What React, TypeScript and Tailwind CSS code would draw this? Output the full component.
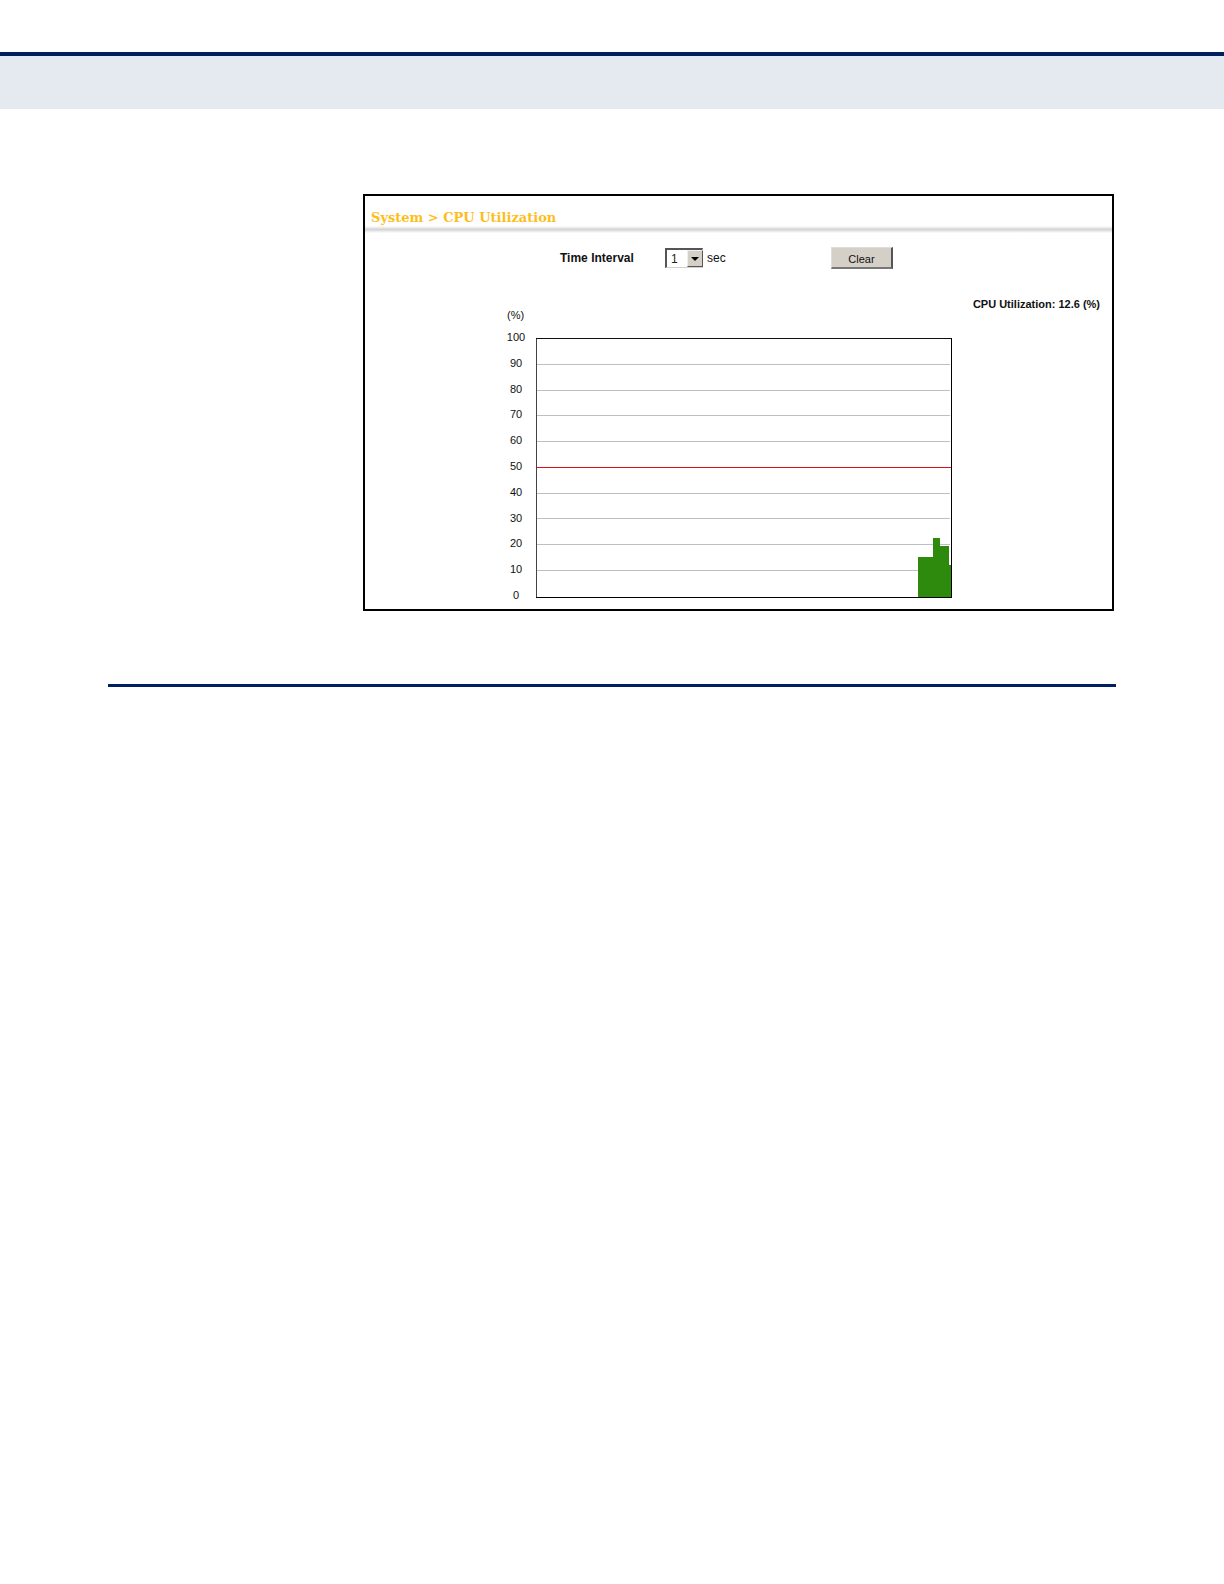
import { useState } from "react"

const ticks: number[] = [100, 90, 80, 70, 60, 50, 40, 30, 20, 10, 0]
const gridLines: number[] = [26, 52, 77, 103, 155, 180, 206, 232]
const initialBars: { x: number; y: number; width: number; }[] = [
  { x: 381, y: 219, width: 15 },
  { x: 396, y: 200, width: 7 },
  { x: 403, y: 208, width: 9 },
  { x: 412, y: 227, width: 2 },
]

function Header() {
  return (
    <header className="pt-[52px]">
      <div className="h-1 bg-[#02205f]" />
      <div className="h-[53px] bg-[#e5e9f0]" />
    </header>
  )
}

function Controls({ onClear }: { onClear: () => void; }) {
  const [interval, setInterval] = useState<string>("1")
  return (
    <div className="flex h-[22px] items-center pl-[195px] text-[12px] text-[#111]">
      <label htmlFor="interval" className="w-[105px] font-bold">Time Interval</label>
      <div className="relative h-5 w-[38px]">
        <select
          id="interval"
          value={interval}
          onChange={(e) => setInterval(e.target.value)}
          className="block h-5 w-full appearance-none border border-t-2 border-l-2 border-[#d4d0c8] border-t-[#555] border-l-[#555] bg-white pl-1 text-[12px] leading-4 text-[#222]"
        >
          <option>1</option>
          <option>5</option>
          <option>10</option>
        </select>
        <span className="pointer-events-none absolute top-0.5 right-0 flex h-[17px] w-4 items-center justify-center border border-[#eee] border-r-[#555] border-b-[#555] bg-[#d4d0c8]">
          <svg width="8" height="4" viewBox="0 0 8 4"><path d="M0 0h8L4 4z" fill="#000" /></svg>
        </span>
      </div>
      <span className="w-[128px] pl-1">sec</span>
      <button
        type="button"
        onClick={onClear}
        className="h-[22px] w-[62px] border border-r-2 border-b-2 border-[#e0ddd8] border-r-[#555] border-b-[#777] bg-[#d4d0c8] pt-0.5 text-[11px] leading-4"
      >
        Clear
      </button>
    </div>
  )
}

function Chart({ bars }: { bars: { x: number; y: number; width: number; }[]; }) {
  return (
    <div className="mt-1.5 flex pr-[160px] pl-[136px]">
      <div className="flex h-[274px] w-[30px] flex-col justify-between text-center text-[11px] leading-4 text-[#111]">
        {ticks.map((tick) => <span key={tick}>{tick}</span>)}
      </div>
      <div className="mt-[9px] ml-[5px] h-[260px] flex-1">
        <svg className="block h-full w-full" viewBox="0 0 415 260" preserveAspectRatio="none" shapeRendering="crispEdges">
          {gridLines.map((y) => <rect key={y} x="1" y={y} width="412" height="1" fill="#bfbfbf" />)}
          <rect x="1" y="129" width="413" height="1" fill="#e00d14" />
          {bars.map((bar) => (
            <rect key={bar.x} x={bar.x} y={bar.y} width={bar.width} height={259 - bar.y} fill="#2d8a0c" />
          ))}
          <rect x="0" y="0" width="1" height="260" fill="#444" />
          <rect x="0" y="0" width="415" height="1" fill="#111" />
          <rect x="414" y="0" width="1" height="260" fill="#000" />
          <rect x="0" y="259" width="415" height="1" fill="#000" />
        </svg>
      </div>
    </div>
  )
}

function App() {
  const [bars, setBars] = useState(initialBars)
  return (
    <div className="min-h-screen bg-white font-['Liberation_Sans',Arial,sans-serif]">
      <Header />
      <main className="mx-[108px] pt-[85px]">
        <section className="mr-0.5 ml-[255px] border-2 border-black pb-1.5">
          <h1 className="h-[30px] pl-1.5 font-['DejaVu_Serif',serif] text-[13px] leading-[44px] font-bold text-[#fdbe1c]">
            System &gt; CPU Utilization
          </h1>
          <div className="mb-[14px] h-[7px] bg-linear-to-b from-white via-[#d4d4d4] to-white" />
          <Controls onClear={() => setBars([])} />
          <div className="mt-[27px] flex h-[27px] justify-between pr-3 pl-[142px] text-[11px] leading-4 text-[#111]">
            <span className="self-end">(%)</span>
            <span className="font-bold">CPU Utilization: 12.6 (%)</span>
          </div>
          <Chart bars={bars} />
        </section>
        <hr className="mt-[73px] h-[3px] border-0 bg-[#02205f]" />
      </main>
    </div>
  )
}

export default App
